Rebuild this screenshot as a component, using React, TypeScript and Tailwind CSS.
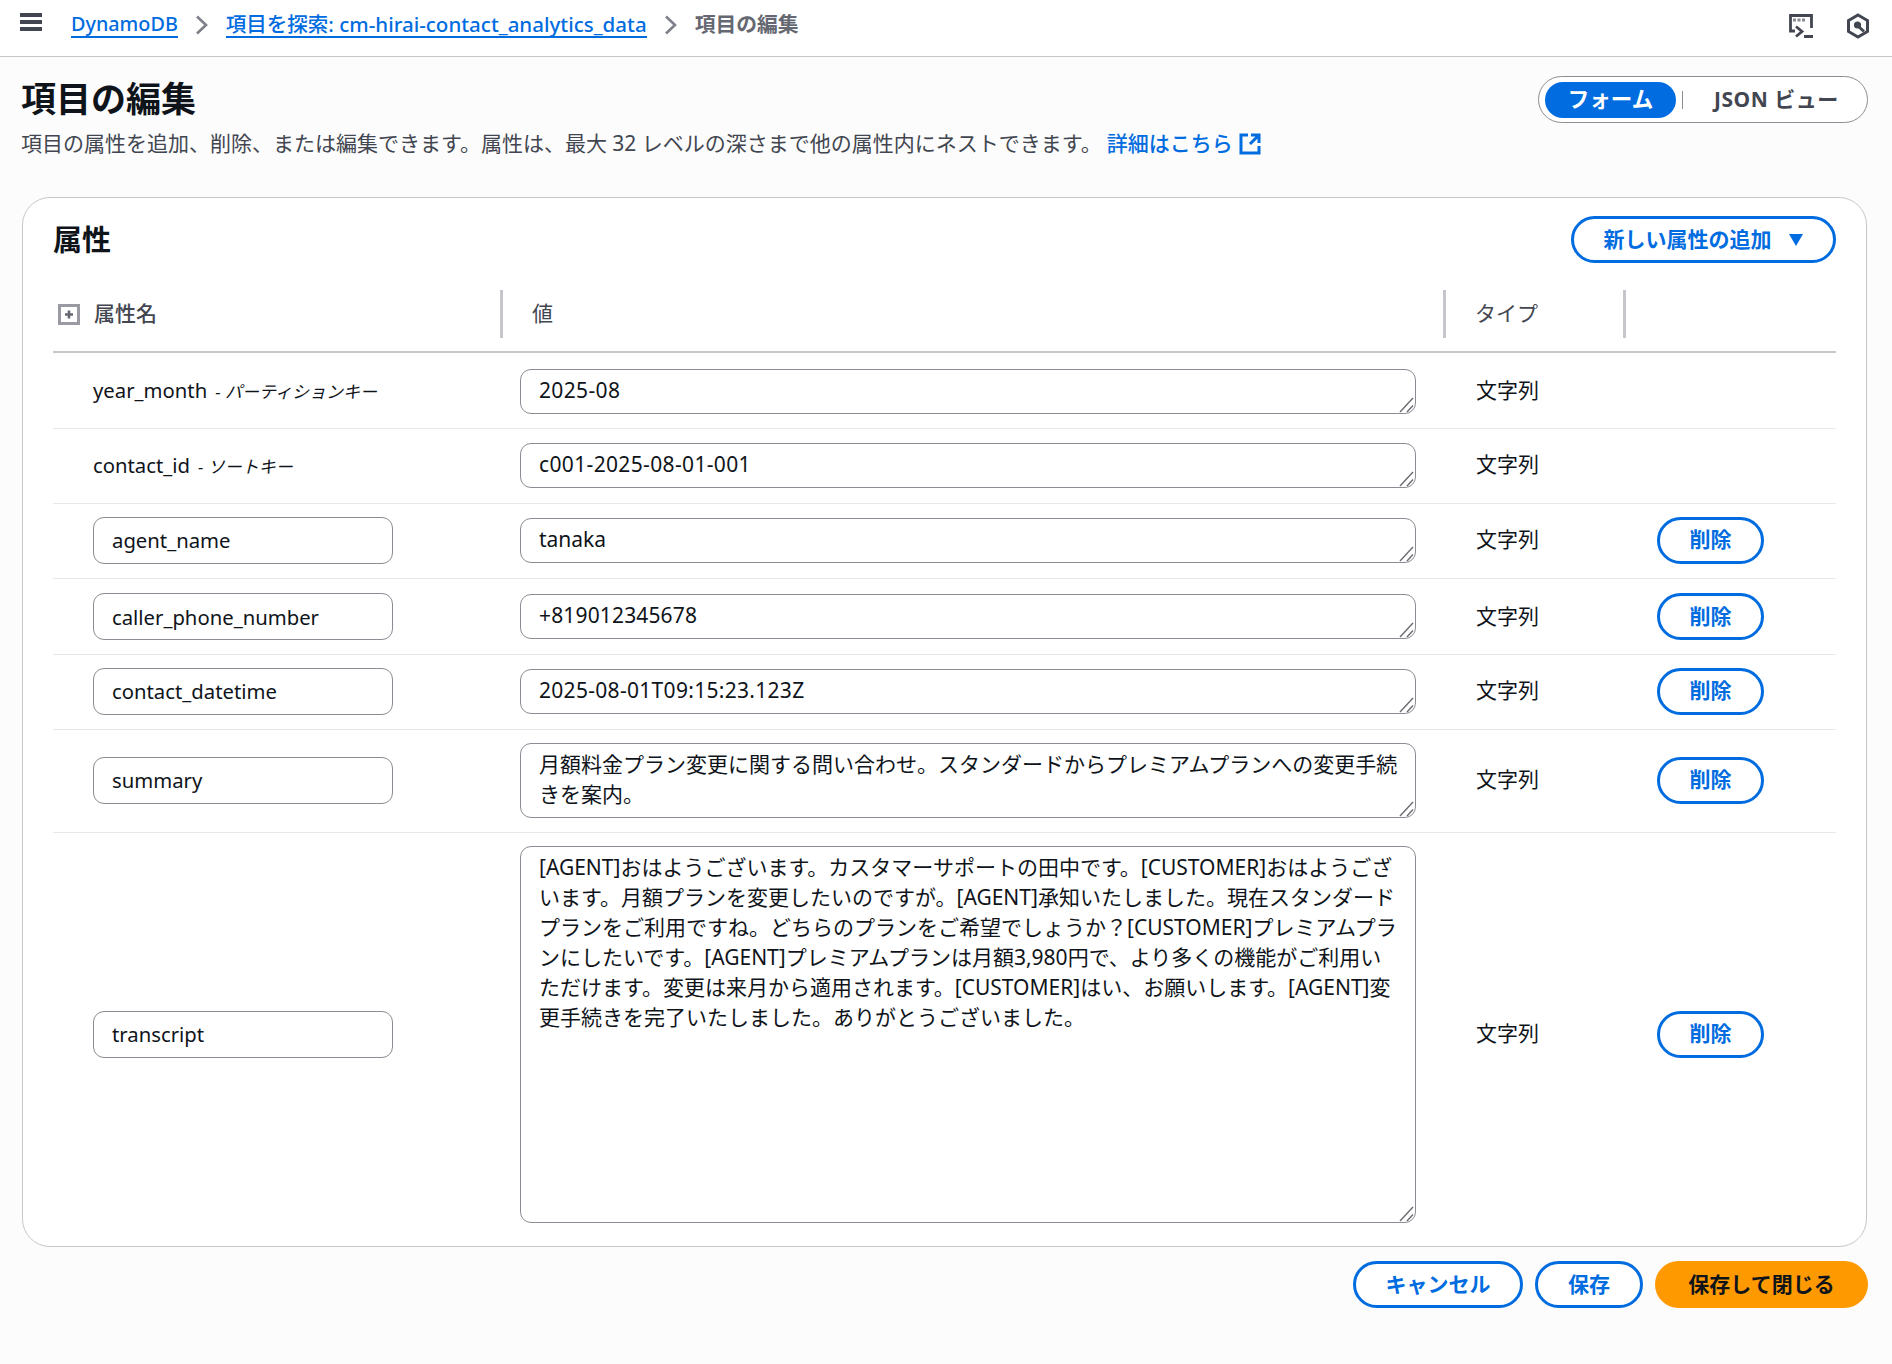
import type { ReactNode } from "react";

const font = "font-['Noto_Sans','Noto_Sans_CJK_JP',sans-serif]";

const transcript =
  "[AGENT]おはようございます。カスタマーサポートの田中です。[CUSTOMER]おはようございます。月額プランを変更したいのですが。[AGENT]承知いたしました。現在スタンダードプランをご利用ですね。どちらのプランをご希望でしょうか？[CUSTOMER]プレミアムプランにしたいです。[AGENT]プレミアムプランは月額3,980円で、より多くの機能がご利用いただけます。変更は来月から適用されます。[CUSTOMER]はい、お願いします。[AGENT]変更手続きを完了いたしました。ありがとうございました。";

const rows = [
  { name: "year_month", keyLabel: "パーティションキー", value: "2025-08", h: "h-[76px]", ta: "mt-[2px] h-[45px] tracking-[0.35px]" },
  { name: "contact_id", keyLabel: "ソートキー", value: "c001-2025-08-01-001", h: "h-[75px] pb-[2px]", ta: "h-[45px] tracking-[0.35px]" },
  { name: "agent_name", value: "tanaka", h: "h-[75px] pb-[2px]", ta: "h-[45px]" },
  { name: "caller_phone_number", value: "+819012345678", h: "h-[76px]", ta: "h-[45px] tracking-[0.15px]" },
  { name: "contact_datetime", value: "2025-08-01T09:15:23.123Z", h: "h-[75px] pb-[2px]", ta: "h-[45px] tracking-[0.3px]" },
  {
    name: "summary",
    value: "月額料金プラン変更に関する問い合わせ。スタンダードからプレミアムプランへの変更手続きを案内。",
    h: "h-[103px] pb-[2px]",
    ta: "h-[75px]",
  },
  { name: "transcript", value: transcript, h: "h-[404px] pb-[2px]", ta: "h-[377px]" },
];

function ChevronIcon() {
  return (
    <svg width="14" height="22" viewBox="0 0 14 22" fill="none" className="shrink-0">
      <path d="M2 2.5l9 8.5-9 8.5" stroke="#7d8089" strokeWidth="2.6" />
    </svg>
  );
}

function CloudShellIcon() {
  return (
    <svg width="24" height="24" viewBox="0 0 24 24" fill="none">
      <path d="M6 17H1.5V1.5h21V14" stroke="#424650" strokeWidth="2.8" />
      <path d="M4 6h3M8.5 6h3M13 6h3" stroke="#878a93" strokeWidth="2.8" />
      <path d="M7 12.5l6 5-6 5" stroke="#424650" strokeWidth="2.8" />
      <path d="M15 22.5h9" stroke="#424650" strokeWidth="3" />
    </svg>
  );
}

function HexIcon() {
  return (
    <svg width="24" height="26" viewBox="0 0 24 26" fill="none">
      <path d="M12 2l9.5 5.5v11L12 24l-9.5-5.5v-11z" stroke="#424650" strokeWidth="3" />
      <circle cx="11.5" cy="12" r="3.6" fill="#424650" />
      <path d="M13 14l5 4.5" stroke="#424650" strokeWidth="3" />
    </svg>
  );
}

function OutlineButton({ children, className = "" }: { children: ReactNode; className?: string }) {
  return (
    <button
      type="button"
      className={`flex h-[47px] items-center justify-center rounded-[24px] border-[3px] border-[#006ce0] bg-white text-[21px] font-bold text-[#006ce0] ${className}`}
    >
      {children}
    </button>
  );
}

function HeaderCell({ children, divider = true }: { children?: ReactNode; divider?: boolean }) {
  return (
    <div className={`flex h-12 items-center gap-[14px] pl-[29px] ${divider ? "border-r-[3px] border-[#c6c6cd]" : ""}`}>
      {children}
    </div>
  );
}

export default function App() {
  return (
    <div className={`flex min-h-[1364px] flex-col bg-[#fcfcfc] text-[21px] text-[#0f141a] ${font}`}>
      <header className="flex h-[57px] items-center border-b border-[#c6c6cd] bg-white pr-[22px] pl-5">
        <div className="mb-[12px] flex w-[22px] flex-col gap-[3px]">
          <span className="h-[4px] bg-[#424650]" />
          <span className="h-[4px] bg-[#424650]" />
          <span className="h-[4px] bg-[#424650]" />
        </div>
        <nav className="mb-[7px] ml-[29px] flex items-center gap-[17px] text-[20.5px] font-medium">
          <a className="border-b-2 border-[#006ce0] text-[19.8px] leading-[24px] text-[#006ce0]">DynamoDB</a>
          <ChevronIcon />
          <a className="border-b-2 border-[#006ce0] leading-[24px] text-[#006ce0]">
            項目を探索: cm-hirai-contact_analytics_data
          </a>
          <ChevronIcon />
          <span className="text-[20.8px] font-bold text-[#656871]">項目の編集</span>
        </nav>
        <div className="mb-1 ml-auto flex items-center gap-[33px]">
          <CloudShellIcon />
          <HexIcon />
        </div>
      </header>

      <main className="flex flex-1 flex-col pr-6 pl-[21px]">
        <div className="flex items-start justify-between pt-[19px]">
          <div>
            <h1 className="mt-px text-[35px] leading-[44px] font-bold">項目の編集</h1>
            <p className="mt-[7px] leading-[30px] text-[#424650]">
              項目の属性を追加、削除、または編集できます。属性は、最大 32 レベルの深さまで他の属性内にネストできます。
              <a className="ml-[5px] inline-flex items-center gap-[6px] font-medium text-[#006ce0]">
                詳細はこちら
                <svg width="23" height="23" viewBox="0 0 23 23" fill="none">
                  <path d="M9 3H2v18h18v-7" stroke="#006ce0" strokeWidth="3" />
                  <path d="M12 3h8v8M20 3l-9 9" stroke="#006ce0" strokeWidth="3" />
                </svg>
              </a>
            </p>
          </div>
          <div className="flex h-[47px] w-[330px] items-center rounded-[24px] border border-[#8c8c94] bg-white pl-[6px]">
            <span className="flex h-[36px] w-[131px] items-center justify-center rounded-[18px] bg-[#006ce0] text-[21.5px] font-bold text-white">
              フォーム
            </span>
            <span className="ml-[6px] h-[18px] w-px bg-[#8c8c94]" />
            <span className="ml-[31px] font-bold tracking-[0.5px] text-[#424650]">JSON ビュー</span>
          </div>
        </div>

        <section className="mt-[39px] mr-px ml-px h-[1050px] rounded-[28px] border border-[#c6c6cd] bg-white px-[30px]">
          <div className="flex h-[92px] items-start justify-between pt-[18px]">
            <h2 className="pt-[3px] text-[29px] leading-[42px] font-bold">属性</h2>
            <OutlineButton className="w-[265px] gap-4">
              新しい属性の追加
              <svg width="16" height="14" viewBox="0 0 16 14">
                <path d="M1 1h14L8 13z" fill="#006ce0" />
              </svg>
            </OutlineButton>
          </div>

          <div className="grid h-[63px] grid-cols-[450px_943px_180px_209px] items-start border-b-2 border-[#c6c6cd] text-[#424650]">
            <div className="flex h-12 items-center gap-[14px] border-r-[3px] border-[#c6c6cd] pl-[5px] font-medium">
              <svg width="22" height="21" viewBox="0 0 22 21" fill="none">
                <rect x="1.5" y="1.5" width="19" height="18" stroke="#9a9aa2" strokeWidth="3" />
                <path d="M11 6.5v8M7 10.5h8" stroke="#656871" strokeWidth="2.6" />
              </svg>
              属性名
            </div>
            <HeaderCell>値</HeaderCell>
            <HeaderCell>タイプ</HeaderCell>
            <HeaderCell divider={false} />
          </div>

          {rows.map((row, i) => (
            <div
              key={row.name}
              className={`grid grid-cols-[450px_943px_180px_209px] items-center ${row.h} ${
                i < rows.length - 1 ? "border-b border-[#e8e8ec]" : ""
              }`}
            >
              <div className="pl-10 text-[20.3px]">
                {row.keyLabel ? (
                  <span>
                    {row.name}
                    <span className="ml-2 text-[17px] italic">- {row.keyLabel}</span>
                  </span>
                ) : (
                  <input
                    readOnly
                    defaultValue={row.name}
                    className="h-[47px] w-[300px] rounded-[11px] border border-[#8c8c94] bg-white px-[18px] outline-none"
                  />
                )}
              </div>
              <div className="pl-[17px]">
                <div className={`relative w-[896px] ${row.ta}`}>
                  <textarea
                    readOnly
                    defaultValue={row.value}
                    className="block h-full w-full resize-none overflow-hidden rounded-[11px] border border-[#8c8c94] bg-white pt-[5px] pr-[15px] pb-[6px] pl-[18px] leading-[30px] outline-none"
                  />
                  <svg
                    width="18"
                    height="18"
                    viewBox="0 0 18 18"
                    fill="none"
                    className="absolute right-px bottom-px"
                  >
                    <path d="M3 17L16 3" stroke="#6a6a72" strokeWidth="1.4" />
                    <path d="M10 17l6-6.5" stroke="#6a6a72" strokeWidth="1.4" />
                  </svg>
                </div>
              </div>
              <div className="pl-[30px]">文字列</div>
              <div className="pl-[31px]">
                {!row.keyLabel && <OutlineButton className="w-[107px]">削除</OutlineButton>}
              </div>
            </div>
          ))}
        </section>

        <div className="mt-[14px] flex justify-end gap-3">
          <OutlineButton className="w-[170px]">キャンセル</OutlineButton>
          <OutlineButton className="w-[108px]">保存</OutlineButton>
          <button
            type="button"
            className="h-[47px] w-[213px] rounded-[24px] bg-[#ff9900] text-[21px] font-bold text-[#0f141a]"
          >
            保存して閉じる
          </button>
        </div>
      </main>
    </div>
  );
}
